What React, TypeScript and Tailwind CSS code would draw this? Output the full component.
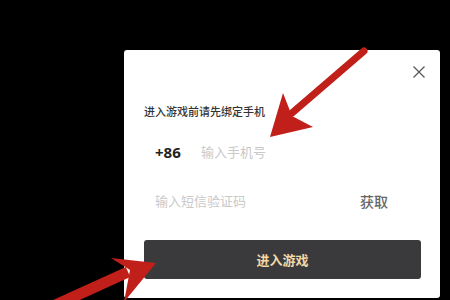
import React from 'react'

const cjk = { fontFamily: '"Noto Sans CJK SC", "Noto Sans", sans-serif' }

const Arrows: React.FC = () => (
  <svg
    className="absolute inset-0 pointer-events-none"
    width="450"
    height="300"
    viewBox="0 0 450 300"
  >
    {/* top arrow */}
    <line x1="364" y1="51" x2="292" y2="113" stroke="#c11f19" strokeWidth="7" strokeLinecap="round" />
    <polygon points="270,137 283,93 292,116 313,127" fill="#c11f19" />
    {/* bottom arrow */}
    <line x1="128" y1="272" x2="40" y2="312" stroke="#c11f19" strokeWidth="11" />
    <polygon points="156,263 111,258 130,270 124,302" fill="#c11f19" />
  </svg>
)

const App: React.FC = () => {
  return (
    <div className="relative w-[450px] h-[300px] bg-black overflow-hidden" style={cjk}>
      <div className="pt-[50px] pl-[124px]">
        <div className="relative w-[316px] bg-white rounded-[3px] px-5 pt-[53px] pb-[19px]">
          <button className="absolute top-[16px] right-[15px] w-[12px] h-[12px] text-[#555]">
            <svg width="12" height="12" viewBox="0 0 12 12">
              <path d="M0.5 0.5 L11.5 11.5 M11.5 0.5 L0.5 11.5" stroke="#555" strokeWidth="1.2" />
            </svg>
          </button>
          <p className="text-[11px] leading-4 text-[#333] font-medium">进入游戏前请先绑定手机</p>
          <div className="mt-[13px] h-[40px] flex items-center pl-[11px]">
            <span
              className="w-[46px] text-[15px] font-bold text-[#222]"
              style={{ fontFamily: '"Open Sans", "Noto Sans", sans-serif' }}
            >
              +86
            </span>
            <span className="text-[13px] text-[#c9c9c9]">输入手机号</span>
          </div>
          <div className="mt-[9px] h-[40px] flex items-center justify-between pl-[11px] pr-[32px]">
            <span className="text-[13px] text-[#c9c9c9]">输入短信验证码</span>
            <span className="text-[14px] text-[#666] font-medium">获取</span>
          </div>
          <button className="mt-[19px] w-[277px] h-[39px] rounded-[3px] bg-[#3a3a3d] text-[13px] font-bold text-[#f1d9a6] flex items-center justify-center">
            进入游戏
          </button>
        </div>
      </div>
      <Arrows />
    </div>
  )
}

export default App
